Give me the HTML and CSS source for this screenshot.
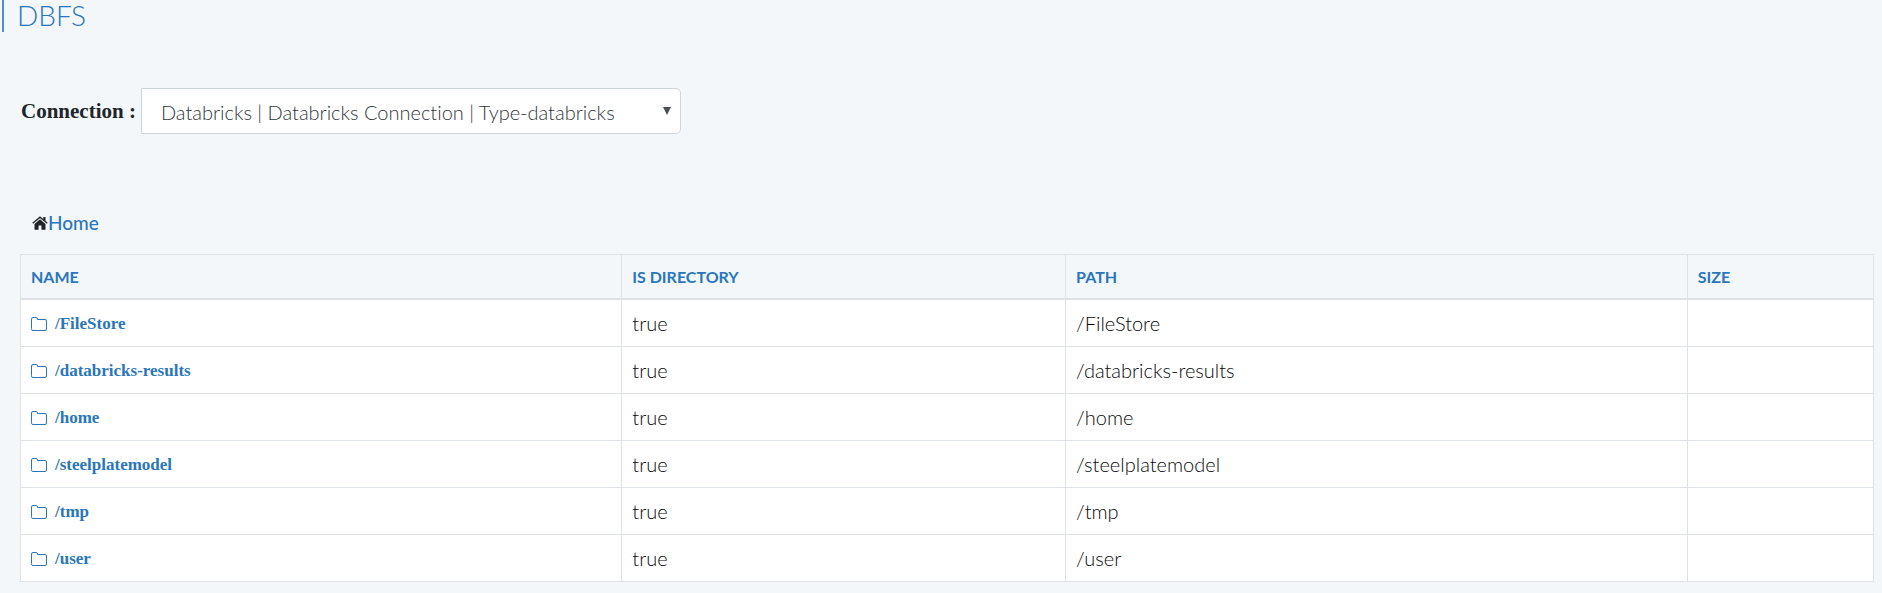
FILE: index.html
```html
<!DOCTYPE html>
<html lang="en">
<head>
<meta charset="utf-8">
<title>DBFS</title>
<link rel="stylesheet" href="styles.css">
</head>
<body>
<svg class="sprite" aria-hidden="true">
  <symbol id="folder" viewBox="0 0 16 14">
    <path d="M.5 11.500v-9.500A1.500 1.500 0 0 1 2 .5h3a1.500 1.500 0 0 1 1.500 1.500v.5h7.500a1.500 1.500 0 0 1 1.500 1.500v8a1.500 1.500 0 0 1-1.500 1.500h-12a1.500 1.500 0 0 1-1.500-1.500z" fill="none" stroke="currentColor"/>
  </symbol>
</svg>
<header class="title-bar"><h1 class="title">DBFS</h1></header>
<main class="content">
  <form class="connection">
    <label class="connection-label" for="connection">Connection :</label>
    <span class="select-wrap">
      <select class="select" id="connection"><option>Databricks | Databricks Connection | Type-databricks</option></select>
      <svg class="arrow" viewBox="0 0 8 8" aria-hidden="true"><path d="M0 0h8L4 8z" fill="currentColor"/></svg>
    </span>
  </form>
  <nav class="breadcrumb">
    <svg class="home-icon" viewBox="0 0 16 14" aria-hidden="true">
      <path d="M8 3.300 2.500 8v5.300q0 .5.500.5h3.600V9.600h2.800v4.200H13q.5 0 .5-.5V8z" fill="currentColor"/>
      <path d="M.7 7.300 8 1.200l7.300 6.100" fill="none" stroke="currentColor" stroke-width="1.300"/>
      <path d="M11.300 1h2.200v4.600l-2.200-1.900z" fill="currentColor"/>
    </svg><a class="home-link" href="#">Home</a>
  </nav>
  <table class="files">
    <colgroup><col class="col-name"><col class="col-dir"><col class="col-path"><col class="col-size"></colgroup>
    <thead><tr><th scope="col">NAME</th><th scope="col">IS DIRECTORY</th><th scope="col">PATH</th><th scope="col">SIZE</th></tr></thead>
    <tbody>
      <tr><td><a class="file" href="#"><svg class="folder"><use href="#folder"/></svg>/FileStore</a></td><td>true</td><td>/FileStore</td><td></td></tr>
      <tr><td><a class="file" href="#"><svg class="folder"><use href="#folder"/></svg>/databricks-results</a></td><td>true</td><td>/databricks-results</td><td></td></tr>
      <tr><td><a class="file" href="#"><svg class="folder"><use href="#folder"/></svg>/home</a></td><td>true</td><td>/home</td><td></td></tr>
      <tr><td><a class="file" href="#"><svg class="folder"><use href="#folder"/></svg>/steelplatemodel</a></td><td>true</td><td>/steelplatemodel</td><td></td></tr>
      <tr><td><a class="file" href="#"><svg class="folder"><use href="#folder"/></svg>/tmp</a></td><td>true</td><td>/tmp</td><td></td></tr>
      <tr><td><a class="file" href="#"><svg class="folder"><use href="#folder"/></svg>/user</a></td><td>true</td><td>/user</td><td></td></tr>
    </tbody>
  </table>
</main>
</body>
</html>
```
FILE: styles.css
```css
* { box-sizing: border-box; }
body {
  margin: 0;
  background: #f3f7fa;
  color: #080a0c;
  font: 300 20px/28px Lato, "Open Sans", sans-serif;
  font-variant-ligatures: none;
}
a { color: #2a76bc; text-decoration: none; }
.sprite { display: none; }
.title-bar { padding-left: 2px; }
.title {
  margin: 0;
  padding: 0 0 2px 13px;
  border-left: 2px solid #4a90d2;
  color: #2a76bc;
  font-size: 28px;
  font-weight: 300;
  line-height: 30px;
}
.content { padding: 56px 8px 10px 20px; }
.connection { display: flex; align-items: center; gap: 5px; padding-left: 1px; }
.connection-label { color: #212529; font: bold 21px/28px "Liberation Serif", serif; }
.select-wrap { position: relative; flex: 0 1 540px; }
.select {
  appearance: none;
  display: block;
  width: 100%;
  height: 46px;
  padding: 2px 40px 0 19px;
  border: 1px solid #ced4da;
  border-radius: 0 5px 5px 0;
  background: #fff;
  color: #30363c;
  font: inherit;
}
.arrow { position: absolute; top: 19px; right: 10px; width: 8px; height: 8px; color: #495057; pointer-events: none; }
.breadcrumb { display: flex; align-items: center; margin: 75px 0 17px; padding-left: 12px; color: #212529; }
.home-icon { width: 16px; height: 14px; }
.home-link { font-size: 19px; font-weight: 500; }
.files {
  width: 100%;
  border-collapse: collapse;
  table-layout: fixed;
  background: #fff;
}
.col-name { width: 32.45%; }
.col-dir { width: 23.95%; }
.col-path { width: 33.55%; }
.col-size { width: 10.05%; }
.files th, .files td { border: 1px solid #dee2e6; padding: 9px 10px; text-align: left; vertical-align: middle; }
.files td { height: 47px; }
.files th {
  height: 44px;
  padding: 8px 10px 6px;
  border-bottom-width: 2px;
  background: #f3f7fa;
  color: #2a76bc;
  font-size: 16px;
  font-weight: 700;
}
.file { display: flex; align-items: center; gap: 8px; padding-top: 2px; font: bold 17px/26px "Liberation Serif", serif; }
.folder { width: 16px; height: 14px; }
```
